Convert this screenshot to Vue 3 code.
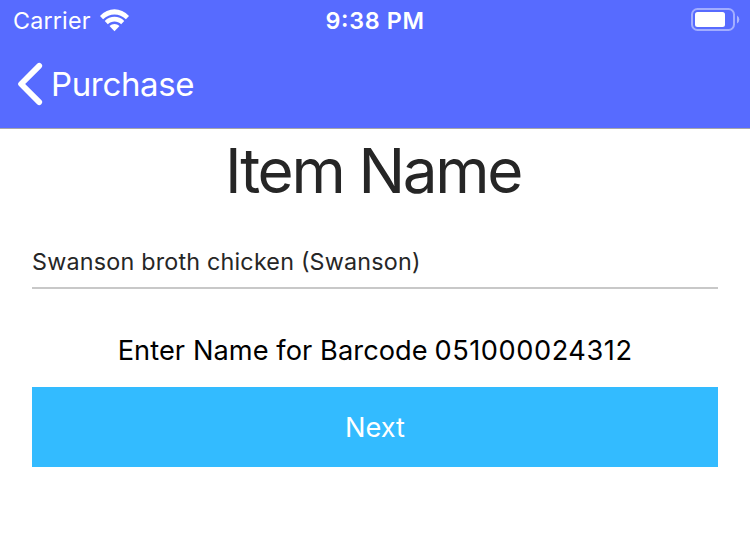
<script setup>
const title = 'Item Name'
const itemName = 'Swanson broth chicken (Swanson)'
const barcode = '051000024312'
</script>

<template>
  <main class="screen">
    <header class="header">
      <div class="status">
        <div class="carrier">
          <svg width="77" height="32"><text x="0" y="29" textLength="77.5">Carrier</text></svg>
          <svg class="wifi" width="29" height="23" viewBox="0 0 30 23" preserveAspectRatio="none">
            <path d="M0 7C8.5-1.9 21.5-1.9 30 7L26.8 10.3C20 4 10 4 3.2 10.3Z" />
            <path d="M4.9 12C10.5 6.4 19.5 6.4 25.1 12L21.9 15.2C18 11.6 12 11.6 8.1 15.2Z" />
            <path d="M9.8 17C12.8 14.2 17.2 14.2 20.2 17L15 22.3Z" />
          </svg>
        </div>
        <svg class="clock" width="100" height="32"><text x="0.5" y="29" textLength="98.5">9:38 PM</text></svg>
        <svg class="battery" width="50" height="24" viewBox="0 0 50 24">
          <rect x="1" y="1" width="42" height="21" rx="5.5" fill="none" stroke="#fff" stroke-opacity=".45" stroke-width="2" />
          <rect x="4" y="4" width="30" height="15" rx="2.5" />
          <path d="M46 7.5Q48.3 8.8 48.3 11.5T46 15.5Z" opacity=".5" />
        </svg>
      </div>
      <nav class="nav">
        <svg width="26" height="44" viewBox="0 0 26 44"><path d="M22.2 3.9L4.1 22L22.2 40.1" fill="none" stroke="#fff" stroke-width="5.8" stroke-linecap="round" stroke-linejoin="round" /></svg>
        <svg width="150" height="50"><text x="-1" y="34" textLength="143.5">Purchase</text></svg>
      </nav>
    </header>
    <section class="content">
      <svg class="title" width="300" height="80"><text x="0" y="64" textLength="298.5">{{ title }}</text></svg>
      <div class="field"><svg width="400" height="40"><text x="0" y="29" textLength="388.5">{{ itemName }}</text></svg></div>
      <svg class="prompt" width="516" height="44">
        <text y="32"><tspan x="0.7" textLength="310">Enter Name for Barcode</tspan> <tspan x="317.5" textLength="197.5">{{ barcode }}</tspan></text>
      </svg>
      <button class="next"><svg width="60" height="40"><text x="0" y="30" textLength="60">Next</text></svg></button>
    </section>
  </main>
</template>

<style>
body { background: #fff; }
</style>

<style scoped>
.screen { width: 750px; height: 556px; overflow: hidden; background: #fff; font-family: Inter, sans-serif; color: #262626; }
svg { display: block; flex: none; overflow: visible; fill: #fff; }
.header { box-sizing: border-box; height: 129px; background: #576bff; border-bottom: 1px solid #a6a6aa; }
.status { display: grid; grid-template-columns: 1fr 100px 1fr; height: 40px; }
.carrier { display: flex; padding-left: 13px; gap: 10px; font-size: 23.3px; }
.wifi { margin-top: 9px; }
.clock { font-size: 23.3px; font-weight: 600; }
.battery { justify-self: end; margin: 8px 9px 0 0; }
.nav { display: flex; padding: 22px 0 0 17px; gap: 9px; font-size: 33px; }
.content { padding: 0 32px; display: flex; flex-direction: column; align-items: center; }
.title { font-size: 62px; fill: #262626; }
.field { align-self: stretch; height: 80px; box-sizing: border-box; border-bottom: 2px solid #c8c8c8; padding-top: 32px; font-size: 23.3px; }
.field svg { fill: #262626; }
.prompt { margin-top: 39px; font-size: 27.2px; fill: #000; }
.next { margin-top: 15px; width: 100%; height: 80px; border: 0; background: #33bbff; padding: 0; display: flex; align-items: center; justify-content: center; font: 27.2px Inter, sans-serif; }
</style>
